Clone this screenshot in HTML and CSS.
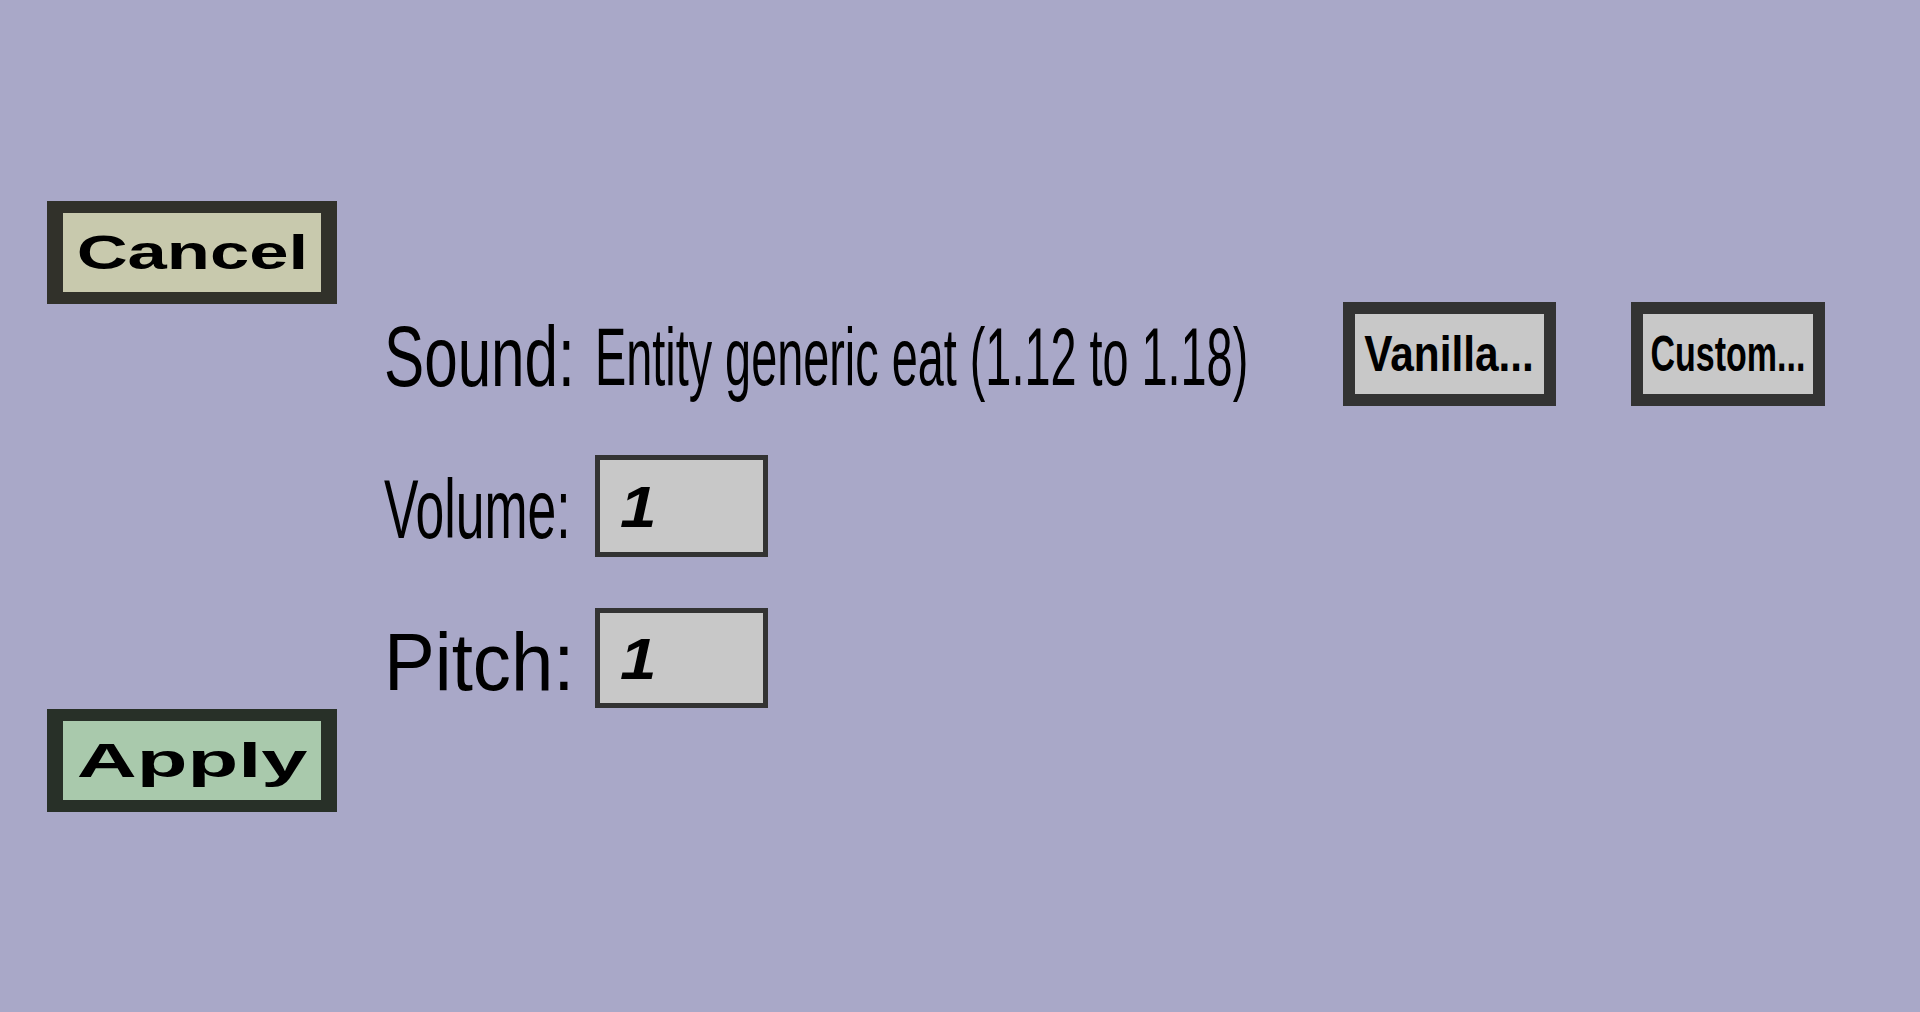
FILE: index.html
```html
<!DOCTYPE html>
<html lang="en">
<head>
<meta charset="utf-8">
<title>Sound settings</title>
<link rel="stylesheet" href="styles.css">
</head>
<body>
<div class="page">
  <div class="side">
    <div class="btn btn-cancel"><span class="t t-cancel">Cancel</span></div>
    <div class="btn btn-apply"><span class="t t-apply">Apply</span></div>
  </div>
  <div class="form">
    <div class="row row-sound">
      <div class="label"><span class="lt lt-sound">Sound:</span></div>
      <div class="value"><span class="vt">Entity generic eat (1.12 to 1.18)</span></div>
      <div class="gbtn gbtn-vanilla"><span class="t t-vanilla">Vanilla...</span></div>
      <div class="gbtn gbtn-custom"><span class="t t-custom">Custom...</span></div>
    </div>
    <div class="row row-volume">
      <div class="label"><span class="lt lt-volume">Volume:</span></div>
      <div class="field field-volume"><span class="num">1</span></div>
    </div>
    <div class="row row-pitch">
      <div class="label"><span class="lt lt-pitch">Pitch:</span></div>
      <div class="field field-pitch"><span class="num">1</span></div>
    </div>
  </div>
</div>
</body>
</html>
```

FILE: styles.css
```css
html, body {
  margin: 0;
  padding: 0;
}
body {
  background: #a9a8c8;
  font-family: "Liberation Sans", Arial, sans-serif;
  color: #000;
  width: 1920px;
  height: 1012px;
  overflow: hidden;
}
.page {
  display: flex;
  align-items: flex-start;
  padding: 201px 0 0 47px;
}
.side {
  display: flex;
  flex-direction: column;
  gap: 405px;
  width: 290px;
  flex: none;
}
.btn {
  box-sizing: border-box;
  width: 290px;
  height: 103px;
  border-style: solid;
  border-width: 12px 16px;
  display: flex;
  align-items: center;
  justify-content: center;
}
.btn-cancel {
  background: #c8c9ad;
  border-color: #31312a;
}
.btn-apply {
  background: #a9c9ac;
  border-color: #283028;
}
.t {
  display: inline-block;
  font-weight: bold;
  line-height: 1;
  white-space: nowrap;
  flex: none;
}
.t-cancel {
  font-size: 49px;
  transform: scaleX(1.44);
}
.t-apply {
  font-size: 49px;
  transform: scaleX(1.695);
}
.t-vanilla {
  font-size: 50px;
  transform: scaleX(0.848);
}
.t-custom {
  font-size: 50px;
  transform: scaleX(0.68);
}
.form {
  margin-left: 47px;
  padding-top: 101px;
  display: flex;
  flex-direction: column;
}
.row {
  display: flex;
  align-items: flex-start;
}
.row-sound {
  height: 104px;
}
.row-volume {
  margin-top: 49px;
}
.row-pitch {
  margin-top: 51px;
}
.label {
  width: 211px;
  flex: none;
  display: flex;
  white-space: nowrap;
}
.lt {
  flex: none;
  line-height: 1;
  transform-origin: left center;
}
.lt-sound {
  font-size: 86px;
  margin-top: 11px;
  transform: scaleX(0.70);
}
.lt-volume {
  font-size: 84px;
  margin-top: 12px;
  transform: scaleX(0.615);
}
.lt-pitch {
  font-size: 81px;
  margin-top: 13.5px;
  transform: scaleX(0.94);
}
.value {
  width: 748px;
  flex: none;
  display: flex;
  white-space: nowrap;
}
.vt {
  flex: none;
  font-size: 81px;
  line-height: 1;
  margin-top: 14.5px;
  transform: scaleX(0.578);
  transform-origin: left center;
}
.gbtn {
  box-sizing: border-box;
  height: 104px;
  border: 12px solid #333333;
  background: #c8c8c8;
  display: flex;
  align-items: center;
  justify-content: center;
  flex: none;
}
.gbtn-vanilla {
  width: 213px;
}
.gbtn-custom {
  width: 194px;
  margin-left: 75px;
}
.field {
  box-sizing: border-box;
  width: 173px;
  border: 5px solid #333333;
  background: #c8c8c8;
  display: flex;
  align-items: center;
  padding: 3px 0 0 20px;
  flex: none;
}
.field-volume {
  height: 102px;
}
.field-pitch {
  height: 100px;
}
.num {
  font-size: 57px;
  font-weight: bold;
  font-style: italic;
  line-height: 1;
  transform: scaleX(1.15);
  transform-origin: left center;
}
```
